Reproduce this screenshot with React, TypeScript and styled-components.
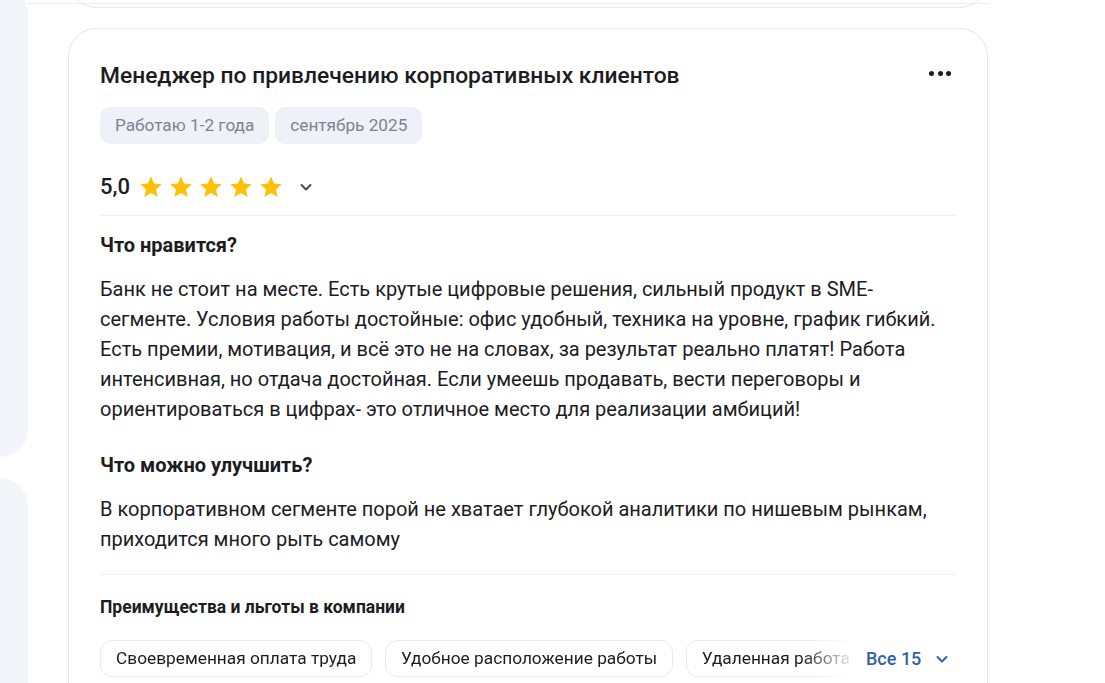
import styled, { createGlobalStyle } from 'styled-components'

const GlobalStyle = createGlobalStyle`
  html, body {
    margin: 0;
    padding: 0;
    background: #ffffff;
    overflow: hidden;
  }
  body {
    font-family: Roboto, 'Noto Sans', Arial, sans-serif;
    color: #1c1c1f;
    -webkit-font-smoothing: antialiased;
  }
`

const Page = styled.div`
  display: flex;
  height: 683px;
  overflow: hidden;
`

const LeftRail = styled.div`
  display: flex;
  flex-direction: column;
  gap: 21px;
  width: 28px;
  margin-top: -14px;
`

const RailPanel = styled.div<{ $height: number }>`
  height: ${({ $height }) => $height}px;
  flex-shrink: 0;
  background: #f4f5fa;
  border-radius: 0 28px 28px 0;
`

const Feed = styled.div`
  width: 960px;
  display: flex;
  flex-direction: column;
`

const TopStrip = styled.div`
  height: 8px;
  flex-shrink: 0;
  overflow: hidden;
  display: flex;
  align-items: flex-end;
  padding-left: 40px;
  background: linear-gradient(#e8ebf1, #e8ebf1) 0 3px / 100% 1px no-repeat;
`

const PrevCard = styled.div`
  width: 920px;
  height: 80px;
  flex-shrink: 0;
  box-sizing: border-box;
  border: 1px solid #e3e7ee;
  border-radius: 28px;
`

const Card = styled.article`
  flex-shrink: 0;
  margin: 20px 0 0 40px;
  width: 920px;
  box-sizing: border-box;
  border: 1px solid #e3e7ee;
  border-radius: 28px;
  padding: 32px 31px 40px 31px;
`

const TitleRow = styled.div`
  display: flex;
  align-items: center;
  justify-content: space-between;
`

const Title = styled.h2`
  margin: 0;
  font-size: 22.8px;
  line-height: 30px;
  font-weight: 500;
  color: #1c1c1f;
`

const MoreButton = styled.button`
  display: flex;
  align-items: center;
  justify-content: center;
  gap: 3.5px;
  width: 32px;
  height: 32px;
  margin-top: -6px;
  padding: 0;
  border: none;
  background: none;
  cursor: pointer;
`

const Dot = styled.span`
  width: 5px;
  height: 5px;
  border-radius: 50%;
  background: #1c1c1f;
`

const Tags = styled.div`
  display: flex;
  gap: 6px;
  margin-top: 16px;
`

const Tag = styled.span`
  padding: 8px 15px;
  font-size: 17.2px;
  line-height: 21px;
  color: #7b8494;
  background: #eef1f7;
  border-radius: 10px;
`

const RatingRow = styled.div`
  display: flex;
  align-items: center;
  height: 32px;
  margin-top: 27px;
  padding-bottom: 12px;
  border-bottom: 1px solid #eef0f4;
`

const Score = styled.span`
  font-size: 22px;
  font-weight: 500;
  line-height: 28px;
  margin-right: 10px;
`

const Stars = styled.div`
  display: flex;
  gap: 8px;
  margin-right: 17px;
`

const Chevron = styled.svg<{ $color?: string }>`
  display: block;
  color: ${({ $color }) => $color || '#474a50'};
`

const SectionTitle = styled.h3<{ $small?: boolean }>`
  margin: ${({ $small }) => ($small ? '21px 0 0' : '0')};
  font-size: ${({ $small }) => ($small ? '17.5px' : '20px')};
  line-height: ${({ $small }) => ($small ? '22px' : '24px')};
  font-weight: 700;
  color: #1c1c1f;
`

const Section = styled.section`
  margin-top: 17px;

  & + & {
    margin-top: 29px;
  }
`

const Body = styled.p`
  margin: 17px 0 0;
  font-size: 20px;
  line-height: 30px;
  color: #1c1c1f;
`

const Divider = styled.hr`
  margin: 20px 0 0;
  border: none;
  border-top: 1px solid #eef0f4;
`

const ChipsRow = styled.div`
  display: flex;
  align-items: center;
  margin-top: 22px;
`

const ChipsViewport = styled.div`
  display: flex;
  gap: 12.5px;
  width: 756px;
  overflow: hidden;
  mask-image: linear-gradient(to right, #000 700px, transparent 756px);
  -webkit-mask-image: linear-gradient(to right, #000 700px, transparent 756px);
`

const Chip = styled.span`
  flex-shrink: 0;
  padding: 7px 15px;
  font-size: 17.3px;
  line-height: 21px;
  color: #1c1c1f;
  border: 1px solid #e6e9ef;
  border-radius: 12px;
`

const ShowAll = styled.button`
  display: flex;
  align-items: center;
  gap: 14px;
  margin-left: 10px;
  padding: 0;
  border: none;
  background: none;
  font-family: inherit;
  font-size: 18px;
  font-weight: 500;
  color: #3661a9;
  cursor: pointer;
`

function Star() {
  return (
    <svg width="22" height="22" viewBox="1.3 1.5 21.4 21">
      <path
        fill="#ffc107"
        d="M12 1.8l3.05 6.9 7.45.7-5.65 5 1.68 7.35L12 17.9l-6.53 3.85 1.68-7.35-5.65-5 7.45-.7z"
      />
    </svg>
  )
}

function ChevronDown({ color, size = 14 }: { color?: string; size?: number }) {
  return (
    <Chevron $color={color} width={size} height={size} viewBox="0 0 14 14" fill="none">
      <path d="M2.5 5l4.5 4.5L11.5 5" stroke="currentColor" strokeWidth="2" strokeLinecap="round" strokeLinejoin="round" />
    </Chevron>
  )
}

const benefits = ['Своевременная оплата труда', 'Удобное расположение работы', 'Удаленная работа', 'Гибкий график']

export default function App() {
  return (
    <>
      <GlobalStyle />
      <Page>
        <LeftRail>
          <RailPanel $height={471} />
          <RailPanel $height={400} />
        </LeftRail>
        <Feed>
          <TopStrip>
            <PrevCard />
          </TopStrip>
          <Card>
            <TitleRow>
              <Title>Менеджер по привлечению корпоративных клиентов</Title>
              <MoreButton aria-label="Ещё">
                <Dot />
                <Dot />
                <Dot />
              </MoreButton>
            </TitleRow>
            <Tags>
              <Tag>Работаю 1-2 года</Tag>
              <Tag>сентябрь 2025</Tag>
            </Tags>
            <RatingRow>
              <Score>5,0</Score>
              <Stars>
                {[0, 1, 2, 3, 4].map((i) => (
                  <Star key={i} />
                ))}
              </Stars>
              <ChevronDown />
            </RatingRow>
            <Section>
              <SectionTitle>Что нравится?</SectionTitle>
              <Body>
                Банк не стоит на месте. Есть крутые цифровые решения, сильный продукт в SME-сегменте. Условия работы
                достойные: офис удобный, техника на уровне, график гибкий. Есть премии, мотивация, и всё это не на
                словах, за результат реально платят! Работа интенсивная, но отдача достойная. Если умеешь продавать,
                вести переговоры и ориентироваться в цифрах- это отличное место для реализации амбиций!
              </Body>
            </Section>
            <Section>
              <SectionTitle>Что можно улучшить?</SectionTitle>
              <Body>
                В корпоративном сегменте порой не хватает глубокой аналитики по нишевым рынкам, приходится много рыть
                самому
              </Body>
            </Section>
            <Divider />
            <SectionTitle $small>Преимущества и льготы в компании</SectionTitle>
            <ChipsRow>
              <ChipsViewport>
                {benefits.map((b) => (
                  <Chip key={b}>{b}</Chip>
                ))}
              </ChipsViewport>
              <ShowAll>
                Все 15
                <ChevronDown color="#3661a9" />
              </ShowAll>
            </ChipsRow>
          </Card>
        </Feed>
      </Page>
    </>
  )
}
